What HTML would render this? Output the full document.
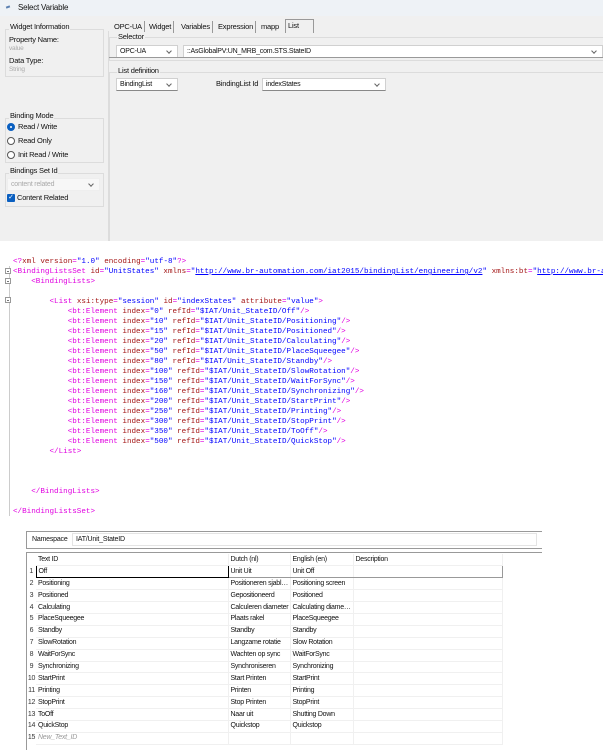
<!DOCTYPE html>
<html><head><meta charset="utf-8"><style>
*{box-sizing:border-box;margin:0;padding:0}
body{width:603px;height:750px;overflow:hidden;background:#fff;font-family:"Liberation Sans",sans-serif;font-size:7.5px;letter-spacing:-0.2px;line-height:10px;color:#111;position:relative}
.a{position:absolute}
.dlg{left:0;top:0;width:603px;height:241px;background:#f0f0f0}
.title{left:0;top:0;width:603px;height:16px;background:#eef2f6}
.gb{border:1px solid #dcdcdc}
.lbl{background:#f0f0f0;padding:0 1px}
.dd{background:#fff;border:1px solid #d0d0d0;border-bottom:1px solid #888;height:13px;padding:1px 3px;font-size:7px;line-height:10px}
.dd:after{content:"";position:absolute;right:6px;top:3px;width:3px;height:3px;border-right:1px solid #666;border-bottom:1px solid #666;transform:rotate(45deg)}
.tab{top:21px;height:12px;padding:1px 2px;font-size:7.5px;border-right:1px solid #999}
.xml{font-family:"Liberation Mono",monospace;font-size:7.6px;letter-spacing:0;white-space:pre;line-height:10px;color:#a31515}
.t{color:#e000e0}.n{color:#a31515}.v{color:#0000ff}.u{color:#0000ff;text-decoration:underline}
.fold{width:6px;height:6px;border:1px solid #999;background:#fff}
.fold:after{content:"";position:absolute;left:1px;top:2px;width:2px;height:1px;background:#777}
table{border-collapse:collapse;font-size:7px;letter-spacing:-0.25px}
td{height:11.9px;border-bottom:1px solid #f0f0f0;border-right:1px solid #f0f0f0;padding:0 2px;white-space:nowrap;overflow:hidden;line-height:10px}
td.r{color:#333;text-align:center;border:none;padding:0;width:9px}
</style></head><body>
<div class="a dlg"></div>
<div class="a title"></div>
<div class="a" style="left:6px;top:6px;width:4px;height:2px;background:#5a7fb0;transform:rotate(-20deg)"></div>
<div class="a" style="left:18px;top:3px;font-size:8px">Select Variable</div>

<div class="a gb" style="left:5px;top:29px;width:99px;height:48px"></div>
<div class="a lbl" style="left:9px;top:22px">Widget Information</div>
<div class="a" style="left:9px;top:35px">Property Name:</div>
<div class="a" style="left:9px;top:44px;color:#aaa;font-size:6.5px">value</div>
<div class="a" style="left:9px;top:56px">Data Type:</div>
<div class="a" style="left:9px;top:65px;color:#aaa;font-size:6.5px">String</div>

<div class="a gb" style="left:5px;top:118px;width:99px;height:45px"></div>
<div class="a lbl" style="left:9px;top:111px">Binding Mode</div>
<div class="a" style="left:7px;top:123px;width:8px;height:8px;border-radius:50%;background:#0a5fc0;border:1px solid #0a5fc0"><div class="a" style="left:2px;top:2px;width:2px;height:2px;border-radius:50%;background:#fff"></div></div>
<div class="a" style="left:18px;top:122px">Read / Write</div>
<div class="a" style="left:7px;top:137px;width:8px;height:8px;border-radius:50%;border:1px solid #555;background:#fff"></div>
<div class="a" style="left:18px;top:136px">Read Only</div>
<div class="a" style="left:7px;top:151px;width:8px;height:8px;border-radius:50%;border:1px solid #555;background:#fff"></div>
<div class="a" style="left:18px;top:150px">Init Read / Write</div>

<div class="a gb" style="left:5px;top:173px;width:99px;height:34px"></div>
<div class="a lbl" style="left:9px;top:166px">Bindings Set Id</div>
<div class="a dd" style="left:7px;top:178px;width:93px;color:#aaa;border-color:#eee;background:#f7f7f7">content related</div>
<div class="a" style="left:7px;top:194px;width:8px;height:8px;background:#0a5fc0;border-radius:1px;color:#fff;font-size:7px;line-height:8px;text-align:center">✓</div>
<div class="a" style="left:17px;top:193px">Content Related</div>

<div class="a" style="left:108px;top:31px;width:1px;height:210px;background:#dcdcdc"></div>

<div class="a tab" style="left:112px">OPC-UA</div>
<div class="a tab" style="left:147px">Widget</div>
<div class="a tab" style="left:179px">Variables</div>
<div class="a tab" style="left:216px">Expression</div>
<div class="a tab" style="left:259px;border-right:none">mapp</div>
<div class="a tab" style="left:285px;top:19px;height:14px;width:29px;border:1px solid #999;border-bottom:none">List</div>

<div class="a gb" style="left:109px;top:37px;width:494px;height:24px;border-right:none"></div>
<div class="a lbl" style="left:117px;top:32px">Selector</div>
<div class="a dd" style="left:116px;top:45px;width:62px">OPC-UA</div>
<div class="a dd" style="left:183px;top:45px;width:420px">::AsGlobalPV:UN_MRB_com.STS.StateID</div>
<div class="a" style="left:109px;top:57px;width:494px;height:1px;background:#999"></div>
<div class="a gb" style="left:109px;top:72px;width:494px;height:169px;border-right:none;border-bottom:none"></div>
<div class="a lbl" style="left:117px;top:66px">List definition</div>
<div class="a dd" style="left:116px;top:78px;width:62px">BindingList</div>
<div class="a" style="left:216px;top:79px">BindingList Id</div>
<div class="a dd" style="left:262px;top:78px;width:124px">indexStates</div>

<div class="a" style="left:9px;top:266px;width:1px;height:250px;background:#ccc"></div>
<div class="a fold" style="left:5px;top:268px"></div>
<div class="a fold" style="left:5px;top:278px"></div>
<div class="a fold" style="left:5px;top:297px"></div>
<div class="a xml" style="left:13px;top:257px"><span class="t">&lt;?</span><span class="n">xml version</span><span class="t">=</span><span class="v">"1.0"</span> <span class="n">encoding</span><span class="t">=</span><span class="v">"utf-8"</span><span class="t">?&gt;</span>
<span class="t">&lt;BindingListsSet</span> <span class="n">id</span><span class="t">=</span><span class="v">"UnitStates"</span> <span class="n">xmlns</span><span class="t">=</span><span class="v">"</span><span class="u">http://www.br-automation.com/iat2015/bindingList/engineering/v2</span><span class="v">"</span> <span class="n">xmlns:bt</span><span class="t">=</span><span class="v">"</span><span class="u">http://www.br-a</span>
    <span class="t">&lt;BindingLists&gt;</span>

        <span class="t">&lt;List</span> <span class="n">xsi:type</span><span class="t">=</span><span class="v">"session"</span> <span class="n">id</span><span class="t">=</span><span class="v">"indexStates"</span> <span class="n">attribute</span><span class="t">=</span><span class="v">"value"</span><span class="t">&gt;</span>
            <span class="t">&lt;bt:Element</span> <span class="n">index</span><span class="t">=</span><span class="v">"0"</span> <span class="n">refId</span><span class="t">=</span><span class="v">"$IAT/Unit_StateID/Off"</span><span class="t">/&gt;</span>
            <span class="t">&lt;bt:Element</span> <span class="n">index</span><span class="t">=</span><span class="v">"10"</span> <span class="n">refId</span><span class="t">=</span><span class="v">"$IAT/Unit_StateID/Positioning"</span><span class="t">/&gt;</span>
            <span class="t">&lt;bt:Element</span> <span class="n">index</span><span class="t">=</span><span class="v">"15"</span> <span class="n">refId</span><span class="t">=</span><span class="v">"$IAT/Unit_StateID/Positioned"</span><span class="t">/&gt;</span>
            <span class="t">&lt;bt:Element</span> <span class="n">index</span><span class="t">=</span><span class="v">"20"</span> <span class="n">refId</span><span class="t">=</span><span class="v">"$IAT/Unit_StateID/Calculating"</span><span class="t">/&gt;</span>
            <span class="t">&lt;bt:Element</span> <span class="n">index</span><span class="t">=</span><span class="v">"50"</span> <span class="n">refId</span><span class="t">=</span><span class="v">"$IAT/Unit_StateID/PlaceSqueegee"</span><span class="t">/&gt;</span>
            <span class="t">&lt;bt:Element</span> <span class="n">index</span><span class="t">=</span><span class="v">"80"</span> <span class="n">refId</span><span class="t">=</span><span class="v">"$IAT/Unit_StateID/Standby"</span><span class="t">/&gt;</span>
            <span class="t">&lt;bt:Element</span> <span class="n">index</span><span class="t">=</span><span class="v">"100"</span> <span class="n">refId</span><span class="t">=</span><span class="v">"$IAT/Unit_StateID/SlowRotation"</span><span class="t">/&gt;</span>
            <span class="t">&lt;bt:Element</span> <span class="n">index</span><span class="t">=</span><span class="v">"150"</span> <span class="n">refId</span><span class="t">=</span><span class="v">"$IAT/Unit_StateID/WaitForSync"</span><span class="t">/&gt;</span>
            <span class="t">&lt;bt:Element</span> <span class="n">index</span><span class="t">=</span><span class="v">"160"</span> <span class="n">refId</span><span class="t">=</span><span class="v">"$IAT/Unit_StateID/Synchronizing"</span><span class="t">/&gt;</span>
            <span class="t">&lt;bt:Element</span> <span class="n">index</span><span class="t">=</span><span class="v">"200"</span> <span class="n">refId</span><span class="t">=</span><span class="v">"$IAT/Unit_StateID/StartPrint"</span><span class="t">/&gt;</span>
            <span class="t">&lt;bt:Element</span> <span class="n">index</span><span class="t">=</span><span class="v">"250"</span> <span class="n">refId</span><span class="t">=</span><span class="v">"$IAT/Unit_StateID/Printing"</span><span class="t">/&gt;</span>
            <span class="t">&lt;bt:Element</span> <span class="n">index</span><span class="t">=</span><span class="v">"300"</span> <span class="n">refId</span><span class="t">=</span><span class="v">"$IAT/Unit_StateID/StopPrint"</span><span class="t">/&gt;</span>
            <span class="t">&lt;bt:Element</span> <span class="n">index</span><span class="t">=</span><span class="v">"350"</span> <span class="n">refId</span><span class="t">=</span><span class="v">"$IAT/Unit_StateID/ToOff"</span><span class="t">/&gt;</span>
            <span class="t">&lt;bt:Element</span> <span class="n">index</span><span class="t">=</span><span class="v">"500"</span> <span class="n">refId</span><span class="t">=</span><span class="v">"$IAT/Unit_StateID/QuickStop"</span><span class="t">/&gt;</span>
        <span class="t">&lt;/List&gt;</span>



    <span class="t">&lt;/BindingLists&gt;</span>

<span class="t">&lt;/BindingListsSet&gt;</span></div>

<div class="a" style="left:26px;top:531px;width:516px;height:18px;border:1px solid #999;border-right:none"></div>
<div class="a" style="left:26px;top:552px;width:516px;height:1px;background:#999"></div>
<div class="a" style="left:32px;top:535px;font-size:7px">Namespace</div>
<div class="a" style="left:72px;top:533px;width:465px;height:13px;background:#fff;border:1px solid #e4e4e4;padding:1px 3px;font-size:7px">IAT/Unit_StateID</div>
<div class="a" style="left:26px;top:553px;width:1px;height:197px;background:#999"></div>
<table class="a" style="left:27px;top:554px;width:475px;table-layout:fixed">
<col style="width:9px"><col style="width:192px"><col style="width:62px"><col style="width:63px"><col style="width:149px">
<tr><td class="r"></td><td>Text ID</td><td>Dutch (nl)</td><td>English (en)</td><td>Description</td></tr>
<tr><td class="r">1</td><td style="border:1px solid #000">Off</td><td style="border-top:1px solid #999;border-bottom:1px solid #999">Unit Uit</td><td style="border-top:1px solid #999;border-bottom:1px solid #999">Unit Off</td><td style="border:1px solid #999;border-left:none"></td></tr>
<tr><td class="r">2</td><td>Positioning</td><td>Positioneren sjabl…</td><td>Positioning screen</td><td></td></tr>
<tr><td class="r">3</td><td>Positioned</td><td>Gepositioneerd</td><td>Positioned</td><td></td></tr>
<tr><td class="r">4</td><td>Calculating</td><td>Calculeren diameter</td><td>Calculating diame…</td><td></td></tr>
<tr><td class="r">5</td><td>PlaceSqueegee</td><td>Plaats rakel</td><td>PlaceSqueegee</td><td></td></tr>
<tr><td class="r">6</td><td>Standby</td><td>Standby</td><td>Standby</td><td></td></tr>
<tr><td class="r">7</td><td>SlowRotation</td><td>Langzame rotatie</td><td>Slow Rotation</td><td></td></tr>
<tr><td class="r">8</td><td>WaitForSync</td><td>Wachten op sync</td><td>WaitForSync</td><td></td></tr>
<tr><td class="r">9</td><td>Synchronizing</td><td>Synchroniseren</td><td>Synchronizing</td><td></td></tr>
<tr><td class="r">10</td><td>StartPrint</td><td>Start Printen</td><td>StartPrint</td><td></td></tr>
<tr><td class="r">11</td><td>Printing</td><td>Printen</td><td>Printing</td><td></td></tr>
<tr><td class="r">12</td><td>StopPrint</td><td>Stop Printen</td><td>StopPrint</td><td></td></tr>
<tr><td class="r">13</td><td>ToOff</td><td>Naar uit</td><td>Shutting Down</td><td></td></tr>
<tr><td class="r">14</td><td>QuickStop</td><td>Quickstop</td><td>Quickstop</td><td></td></tr>
<tr><td class="r">15</td><td style="color:#999;font-style:italic">New_Text_ID</td><td></td><td></td><td></td></tr>
</table>
</body></html>
